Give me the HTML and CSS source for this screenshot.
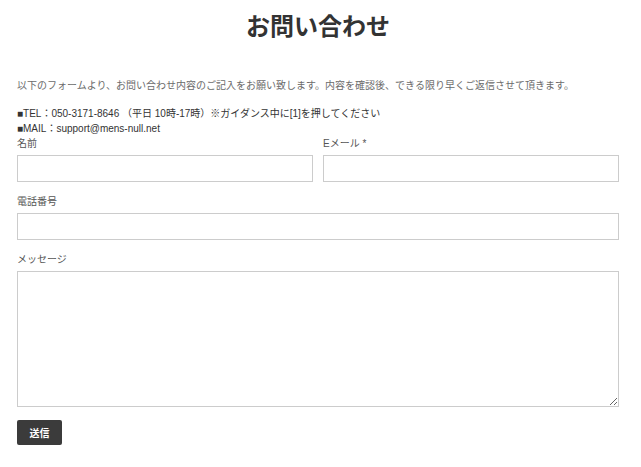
FILE: index.html
```html
<!DOCTYPE html>
<html lang="ja">
<head>
<meta charset="utf-8">
<title>お問い合わせ</title>
<link rel="stylesheet" href="styles.css">
</head>
<body>
<main class="page">
  <h1 class="title">お問い合わせ</h1>
  <p class="intro">以下のフォームより、お問い合わせ内容のご記入をお願い致します。内容を確認後、できる限り早くご返信させて頂きます。</p>
  <div class="contact">
    <div>■TEL：050-3171-8646 （平日 10時-17時）※ガイダンス中に[1]を押してください</div>
    <div>■MAIL：support@mens-null.net</div>
  </div>
  <form class="form">
    <div class="row">
      <div class="field">
        <label class="label">名前</label>
        <input class="input" type="text">
      </div>
      <div class="field">
        <label class="label">Eメール *</label>
        <input class="input" type="text">
      </div>
    </div>
    <div class="field">
      <label class="label">電話番号</label>
      <input class="input" type="text">
    </div>
    <div class="field">
      <label class="label">メッセージ</label>
      <textarea class="textarea"></textarea>
    </div>
    <button class="submit" type="button">送信</button>
  </form>
</main>
</body>
</html>
```

FILE: styles.css
```css
html, body {
  margin: 0;
  padding: 0;
  background: #fff;
}
body {
  font-family: "Liberation Sans", "Noto Sans CJK JP", sans-serif;
  color: #333;
}
.page {
  width: 602px;
  margin-left: 17px;
  padding-top: 9px;
}
.title {
  margin: 0;
  font-size: 24px;
  line-height: 36px;
  font-weight: bold;
  text-align: center;
  color: #333;
}
.intro {
  margin: 33px 0 0;
  font-size: 10px;
  line-height: 15px;
  color: #6b6b6b;
}
.contact {
  margin-top: 13px;
  font-size: 10px;
  line-height: 15px;
  color: #333;
}
.form {
  display: flex;
  flex-direction: column;
}
.row {
  display: flex;
  gap: 10px;
}
.row .field {
  flex: 1;
}
.field {
  display: flex;
  flex-direction: column;
  margin-bottom: 12px;
}
.label {
  font-size: 10px;
  line-height: 15px;
  color: #555;
  margin-bottom: 4px;
}
.input {
  box-sizing: border-box;
  height: 27px;
  width: 100%;
  margin: 0;
  border: 1px solid #ccc;
  border-radius: 0;
  padding: 4px 6px;
  font: inherit;
  background: #fff;
}
.textarea {
  box-sizing: border-box;
  height: 136px;
  width: 100%;
  margin: 0;
  border: 1px solid #ccc;
  border-radius: 0;
  padding: 4px 6px;
  font: inherit;
  background: #fff;
  display: block;
}
.submit {
  align-self: flex-start;
  margin-top: 1px;
  width: 45px;
  height: 25px;
  border: none;
  border-radius: 2px;
  background: #3b3b3b;
  color: #fff;
  font-family: "Liberation Sans", "Noto Sans CJK JP", sans-serif;
  font-size: 10px;
  font-weight: bold;
  padding: 0;
}
```
